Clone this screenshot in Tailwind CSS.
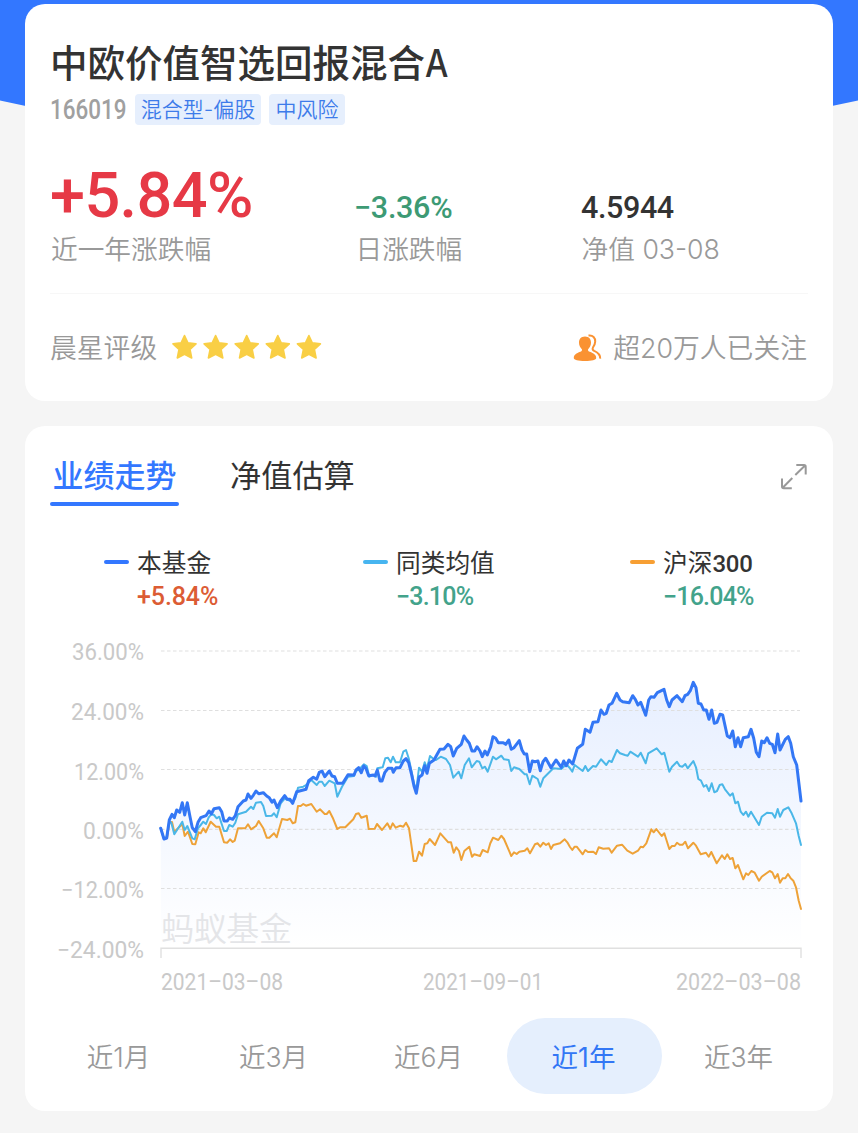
<!DOCTYPE html>
<html lang="zh-CN">
<head>
    <meta charset="UTF-8">
    <meta name="viewport" content="width=device-width, initial-scale=1.0">
    <title>中欧价值智选回报混合A</title>
    <!-- Tailwind CSS for styling -->
    <script src="https://cdn.jsdelivr.net/npm/@tailwindcss/browser@4"></script>
    <style>
        body {
            font-family: 'Inter', 'Noto Sans CJK SC', sans-serif;
        }
        .num {
            font-family: 'Roboto', 'Noto Sans CJK SC', sans-serif;
        }
    </style>
</head>
<body class="relative bg-[#f5f5f5] w-[858px] h-[1133px] overflow-hidden pt-1 px-[25px] whitespace-nowrap">

    <!-- Blue header behind the first card -->
    <svg class="absolute left-0 top-0 -z-10" width="858" height="150" viewBox="0 0 858 150">
        <path d="M0 0H858V100.5Q429 196 0 100.5Z" fill="#3377ff" />
    </svg>

    <!-- Fund summary -->
    <div class="h-[397px] bg-white rounded-[20px] px-[25px] pt-[35px]">
        <h1 class="h-[50px] leading-[50px] text-[37.5px] font-medium text-[#333]">中欧价值智选回报混合<span class="inline-block origin-left scale-x-[0.88]">A</span></h1>
        <div class="mt-[5px] flex h-[31px] items-center text-[21px]">
            <div class="w-[85px] pt-[3px]">
                <span class="num inline-block origin-left scale-x-[0.83] text-[27px] leading-[31px] font-medium text-[#a0a0a0]">166019</span>
            </div>
            <span class="w-[126px] h-[31px] leading-[31px] text-center rounded-[4px] bg-[#e6effd] font-[350] text-[#3d7bea]">混合型-偏股</span>
            <span class="ml-2 w-[76px] h-[31px] leading-[31px] text-center rounded-[4px] bg-[#e6effd] font-[350] text-[#3d7bea]">中风险</span>
        </div>

        <div class="mt-[38px] grid grid-cols-[304px_226px_1fr] items-end">
            <div class="num h-16 leading-[66px] text-[63px] tracking-[-0.6px] font-medium text-[#e63946]">+5.84%</div>
            <div class="num h-10 leading-[42px] text-[30.5px] tracking-[-0.3px] font-medium text-[#3d9a74]">−3.36%</div>
            <div class="num h-10 pl-px leading-[42px] text-[30.5px] tracking-[-0.4px] font-medium text-[#333]">4.5944</div>
        </div>
        <div class="mt-[2px] grid grid-cols-[304.5px_226px_1fr] h-10 pl-px leading-[41px] text-[26.7px] font-[350] text-[#999]">
            <div>近一年涨跌幅</div>
            <div>日涨跌幅</div>
            <div>净值 03-08</div>
        </div>

        <div class="mt-6 border-t border-[#f7f7f7]"></div>

        <div class="mt-[34px] flex h-10 items-center text-[26.8px] font-[350] text-[#999]">
            <span class="leading-[40px]">晨星评级</span>
            <!-- Star rating -->
            <svg class="ml-[15px] mb-[2px]" width="152" height="26" viewBox="0 0 152 26" fill="#f9cf45" stroke="#f9cf45" stroke-width="1.6" stroke-linejoin="round">
                <defs>
                    <path id="star" d="M12.5 1.5L15.9 8.9L24 9.8L18 15.3L19.7 24L12.5 20.2L5.3 24L7 15.3L1 9.8L9.1 8.9Z" />
                </defs>
                <use href="#star" />
                <use href="#star" x="31.1" />
                <use href="#star" x="62.2" />
                <use href="#star" x="93.3" />
                <use href="#star" x="124.4" />
            </svg>
            <svg class="ml-auto mr-[11px]" width="29" height="28" viewBox="0 0 29 28">
                <path d="M12 2.5C7.8 2.5 6 5.4 6 8.6C6 11.4 7.1 13.6 8.9 15.2C9.3 16.6 8.6 17.2 7.2 17.8C3.4 19.4 .8 20.6 .8 24C.8 26 5.2 27 12 27S23.2 26 23.2 24C23.2 20.6 20.6 19.4 16.8 17.8C15.4 17.2 14.7 16.6 15.1 15.2C16.9 13.6 18 11.4 18 8.6C18 5.4 16.2 2.5 12 2.5Z" fill="#fa9232" />
                <path d="M15.5 1.6C20 1 22.4 4 22.2 7.6C22 10.2 21.2 12 20 13.4C19.2 14.8 19.6 16 21.2 16.8C25.4 18.6 27.4 20.4 27.2 24.6" fill="none" stroke="#fa9232" stroke-width="2" />
            </svg>
            <span class="leading-[40px] mr-px">超20万人已关注</span>
        </div>
    </div>

    <!-- Performance -->
    <div class="mt-[25px] h-[685px] bg-white rounded-[20px] pt-[26px]">
        <div class="flex h-[54px] px-[25px]">
            <div class="relative w-[129px] text-center leading-[48px] text-[31px] font-medium text-[#3377ff]">
                业绩走势
                <span class="absolute left-0 bottom-0 w-full h-1 rounded-sm bg-[#3377ff]"></span>
            </div>
            <div class="ml-[51px] leading-[48px] text-[31.2px] text-[#333]">净值估算</div>
            <svg class="ml-auto mt-[11px]" width="28" height="28" viewBox="0 0 28 28" fill="none" stroke="#999" stroke-width="2">
                <path d="M15.3 12L25.3 2.3M16.3 2H24Q25.7 2 25.7 3.7V11.5M12.3 15L2.7 24.7M2 15.5V23.5Q2 25.3 3.8 25.3H11.8" />
            </svg>
        </div>

        <!-- Legend -->
        <div class="mt-[39px] pl-[79px] grid grid-cols-[259px_267px_1fr] text-[24.7px] text-[#333]">
            <div class="grid grid-cols-[33px_1fr] items-center">
                <span class="w-[25px] h-1 rounded-sm bg-[#3377ff]"></span>
                <span class="h-[34px] leading-[36px]">本基金</span>
                <span class="num col-start-2 h-[34px] leading-[36px] text-[25px] tracking-[-0.1px] font-medium text-[#dc5c34]">+5.84%</span>
            </div>
            <div class="grid grid-cols-[33px_1fr] items-center">
                <span class="w-[25px] h-1 rounded-sm bg-[#47b5f0]"></span>
                <span class="h-[34px] leading-[36px]">同类均值</span>
                <span class="num col-start-2 h-[34px] leading-[36px] text-[25px] tracking-[-0.8px] font-medium text-[#43a38b]">−3.10%</span>
            </div>
            <div class="grid grid-cols-[33px_1fr] items-center">
                <span class="w-[25px] h-1 rounded-sm bg-[#f79f33]"></span>
                <span class="h-[34px] leading-[36px]">沪深<span class="num text-[24px] tracking-[-0.2px] font-medium">300</span></span>
                <span class="num col-start-2 h-[34px] leading-[36px] text-[25px] tracking-[-0.8px] font-medium text-[#43a38b]">−16.04%</span>
            </div>
        </div>

        <!-- Chart -->
        <svg class="num mt-[17px]" width="808" height="370" viewBox="25 630 808 370">
            <defs>
                <linearGradient id="area" x1="0" y1="682" x2="0" y2="948" gradientUnits="userSpaceOnUse">
                    <stop offset="0" stop-color="#3377ff" stop-opacity="0.12" />
                    <stop offset="0.5" stop-color="#3377ff" stop-opacity="0.06" />
                    <stop offset="1" stop-color="#3377ff" stop-opacity="0" />
                </linearGradient>
            </defs>

            <path id="fund-area" fill="url(#area)" />
            <path d="M161 651H800M161 710.5H800M161 769.5H800M161 829.3H800M161 888.5H800" stroke="#dfdfdf" stroke-width="1.2" stroke-dasharray="3.5 2.5" />
            <text x="161" y="941" font-size="33" font-weight="350" fill="#e4e5e8" textLength="131">蚂蚁基金</text>
            <path d="M161 958V948.3H801V958" fill="none" stroke="#e0e0e0" stroke-width="1.4" />

            <g font-size="23" fill="#c9c9c9">
                <text x="72" y="660" textLength="72" lengthAdjust="spacingAndGlyphs">36.00%</text>
                <text x="71" y="720" textLength="73" lengthAdjust="spacingAndGlyphs">24.00%</text>
                <text x="74" y="779.5" textLength="70" lengthAdjust="spacingAndGlyphs">12.00%</text>
                <text x="83" y="839" textLength="61" lengthAdjust="spacingAndGlyphs">0.00%</text>
                <text x="61" y="898" textLength="83" lengthAdjust="spacingAndGlyphs">−12.00%</text>
                <text x="57" y="958" textLength="87" lengthAdjust="spacingAndGlyphs">−24.00%</text>
                <text x="161" y="989.5" textLength="122" lengthAdjust="spacingAndGlyphs">2021–03–08</text>
                <text x="423" y="989.5" textLength="120" lengthAdjust="spacingAndGlyphs">2021–09–01</text>
                <text x="676" y="989.5" textLength="125" lengthAdjust="spacingAndGlyphs">2022–03–08</text>
            </g>

            <g fill="none" stroke-linejoin="round" stroke-linecap="round">
                <polyline stroke="#eea238" stroke-width="2" points="160.7,828.3 164,839 167,838 169.3,823 172,822 174.3,832 182.3,824 184.7,836 188,831.7 192.3,844 195.3,844.3 198.7,832.3 200.7,833.3 203.3,828.3 205.7,832.3 210.7,821.7 216,826.7 219.3,826.7 224,842.3 227.3,842.7 230,839.3 232.7,842 234.7,840.7 238,828.3 245.3,828.3 248,824.3 251,829.3 256,826 258.7,821 263.3,828.3 266.7,837.7 269.3,837.7 274,833.3 276.7,837.3 282,819 287.3,820 290,818.7 292.7,823.3 295.3,822.3 298,806 300.7,806 303.3,804 306,805.7 311.3,804 316.7,811.7 320,809.3 324.7,814 326.7,814 329.3,811 332.7,817.7 337.3,829 340,827.3 345.3,827.3 353.3,819.3 356,814 358.7,813.3 361.3,817.7 366.7,815.7 368.7,829 374.7,828.7 377,824 382,830 387.3,823.3 390.3,828.7 392.7,823.3 395.7,827.7 400.3,825.7 403.3,826.7 406,822.7 409,828.3 411.3,844.3 413.7,861 416.3,861 419,851.7 422,855.7 424.7,844 427.3,843.3 429.7,839 435,845 440.3,833.3 448.3,842.3 451,842.3 453.7,852.7 456.3,847.3 459,851 461.3,860 464.3,851 469.3,846.7 472,856.7 474.3,854.3 480,856 482.7,850 487.7,852.3 490.3,843.3 493,837.7 498.3,840 501.3,835.7 504,839 509,850.7 511.3,856 514,852.3 516.7,854 519.3,851.7 524.7,850.7 527.3,848.3 530,853.3 535,844.3 537.7,843.3 540.3,846.7 543.3,842.7 546,845 548.7,843.3 551,849 553.3,845 560,843.3 564.7,839.3 567.3,842.3 570,847 572.3,850 574.7,846.7 576.7,846.7 582.7,854.3 585.3,850 588,852 593.3,851.7 596,854 598.7,847.3 603.3,848.7 609,848.3 611.7,852.7 617,845.7 622,844.7 627.3,850.7 632.7,853.7 638,850.7 640.7,846.7 643,847.3 646.3,843.3 651.3,829.3 653.7,832.3 656.3,829 661.7,836 664.3,833.3 669.3,849 672,846 674.7,846 677,842.7 679.7,844.7 682.7,844.7 685.3,841.7 688,848.3 693.3,842.7 696,845.7 700.7,854.3 706,852.7 708.7,856.7 711.3,852 716.7,863.3 722,855.3 724.7,859 727.3,854.3 730,859 732.7,858 735.3,868.3 738,865 743.3,879.3 746,873.3 748.3,875 751.3,871 754.7,872.7 759,880.7 761.7,876.7 769.7,871 772.3,872.3 775,878.3 777.7,874 780,882.7 782.7,878.3 785.3,878.3 788,874 790.7,878.3 793.3,880.7 796,887.3 798.7,900.7 801,909" />
                <polyline stroke="#4ab7e8" stroke-width="2" points="160.7,828.3 164,839 166.7,836.7 169.3,821.7 171.3,822.7 174.3,834.3 182.3,821.7 184.7,830 187.3,826 192.3,838.3 194.7,839.3 198,828.3 200.7,825 203.3,821.7 206,824 208.7,817.3 211.3,814.3 214,815 216.7,818.3 219.3,816.7 224,831 226.7,831 229.3,825 232.7,826.7 235.3,822.7 238,814.3 246,811.7 251,806.7 253.3,809 256,802.7 261,802 263.3,806 266,816 271.7,815.7 274,813.3 276.7,817.3 280.7,803.3 284.7,798.7 292.7,801.7 295.3,798.3 298,787.7 303.3,786.7 306,785 311.3,780 316.7,785 319.3,781.7 322,781.7 324.7,786 329.3,780.7 334.7,783.3 337.3,796.7 342,786.7 348,776.7 354,776 356,770.7 358.7,770 364,764.3 366.7,766 369.3,776.7 373.3,775 376,776.7 377.3,768.3 382.7,767.3 385.3,758.3 388,757.7 390.7,762.3 393,756.7 395.7,762.3 400,762.3 403.3,751.7 406,750 408.7,758.3 411.3,770 414,783.3 416.3,790 419,767.7 422,771.7 424.7,762.3 427,768.3 430,756 432.7,758.3 436,760 440.7,756.7 446,759 450,765 453.3,777.7 458.7,771.7 461.3,778.3 464.7,765 469,758.3 471.7,767.3 476.7,761 479.3,761.7 482.3,768.3 485,766.7 487.7,771.7 493,756.7 496,759.3 501.3,755.7 504,759.3 508.7,760 511.3,771 514,767.3 519.3,769 524.7,774.3 526.7,774.3 529.7,784.3 532.3,775.7 537.7,779 540.3,786.7 543.3,778.3 548.3,773.3 553.3,768.3 561.3,769 566.3,764.3 570,768.3 572.3,771.7 574.7,765 582.7,771 585.3,766 588,771 593,766 596,766.7 601,759.3 606.3,765 609,760.7 611.7,762 617,750 620,753.3 625,755 627.7,755.7 630.3,751.7 638,756.7 640.7,752.7 645.7,763.3 648.3,753.3 656.7,748.3 661.7,754.3 664.3,752.7 669.3,771.7 672,766.7 677,761.7 679.7,766 682.3,766.7 685.3,764 687.7,768.3 693.3,761 696,767.3 698.3,779 701,780.7 703.7,786.7 706.3,785 709,791 711.7,783.3 714.3,792.3 717,791 719.7,785 722.3,784.3 725,789.3 730,795.7 732.7,793.3 735.3,803.3 738,801.7 740.7,811.7 743.3,815 746,811.7 748.3,816.7 751,811.7 759,825 761.7,816.7 767,812.7 772.3,813.3 775,817.7 777.7,809 780,816.7 783.3,810 788.3,807.3 791.7,813.3 796,823.3 798.7,836 801,845" />
                <polyline id="fund-line" stroke="#3377f5" stroke-width="3" points="160.7,828.3 164,839 166.7,838 169.3,820 172,814.3 174.3,817.7 176.7,810 179.7,812.3 182.3,802.7 184.7,815 187.3,802.7 190,816.7 192.3,827.7 195.3,831.7 198,822.3 200.7,817.7 206,815.7 209,811 211.3,814 214,808.7 219.3,807.7 221.7,811.7 224,821 227.3,821 229.3,818 232.7,819.3 235.3,815.7 238,806.7 243.3,801 246,800 248,794 251,798.3 253.3,795.3 256,791 258.7,793.7 263.3,792.7 266.7,796 269.3,797.7 272,802.3 274,800 277.3,807.7 280.7,801 284.7,795.7 287.3,799.3 290,799.3 292.7,803.3 296.7,791.7 303.3,790 306,789.3 308.7,780.7 313.3,777.3 316.7,779.3 319.3,772.3 322,771 324.7,776.7 329.3,771 332,776 334.7,776.7 337.3,783.3 342.7,783.3 348,774.7 354,775 356,770 358.7,767.7 361.3,772.7 363.7,766 366,768.5 368.7,775.7 373.3,775 375,776 377.3,770 380,781 382,781 384.7,772.7 388,768.3 392,768.3 393.3,772.3 396,767.7 400,767.7 403.3,761 406,758.7 408.7,762.7 411.3,773.3 414,786 416.3,793.3 419,777.3 422,775 424.7,765.7 427,773.3 429.3,763.3 434,760 437.3,754 440,749.3 444,749 448,744.3 450.7,746.7 453.3,756 456.7,748.3 461.3,744.3 464,736 466.7,740 469.3,743.3 472,751 474.7,751 477,746.7 480,751 482.3,756.7 485,751 487.3,755 490.7,746.7 493,736.7 495.7,738.3 498.3,742.7 503.3,742.7 505.7,744.3 508.7,740 511.3,749.3 514,747.7 519.3,740.7 522,750 524.3,754 526.7,754 529.7,771.7 532.3,761 535,761.7 538,761 540.3,770.7 543,761.7 545.7,758.3 551,767.7 556,760 561.3,767.3 563.7,761 566.3,765.7 569,760 572.7,764 577.3,748.3 582.7,744.3 585.3,729.3 590,732.3 593,722.3 598,721.7 601,710 604,714.3 606.3,713.3 609,705 612,703.3 616.7,693.3 620,700 622.7,701.7 629.3,702.7 632.7,695.7 635.3,699.3 638,705 640.7,702.3 645.7,715.3 648.7,700 651,696.7 654,697.3 657.3,692.7 664,689.3 666.7,700 669.3,706.7 672,700 677,695.7 682.3,701.7 685,695.7 687.7,694.3 690.3,690.7 693.3,682.3 696,687.7 698.3,703.3 701,704 703.7,710 706.3,710 709,719.3 711.7,710 714.3,723.3 717,722.3 720,714.3 722.7,715 727.3,736 730,737.7 732.7,731 735.3,746.7 738,737.7 740.7,746.7 743.3,737.7 748.3,736.7 751,729.3 753.7,738.3 756.3,752.3 759,756.7 761.7,741 764.3,742.7 767,737.7 769.7,743.3 772.3,744.3 775,752.7 777.7,734 780,750 785.3,739.3 788.3,736.7 790.7,743.3 793.3,756.7 796.7,765 801,801" />
            </g>
        </svg>

        <!-- Period selector -->
        <div class="mt-[18px] ml-[17px] grid grid-cols-[repeat(5,155px)] grid-rows-[76px] text-center leading-[78px] text-[26.5px] font-[350] text-[#999]">
            <div class="pr-[2px]">近1月</div>
            <div class="pr-[2px]">近3月</div>
            <div class="pr-[2px]">近6月</div>
            <div class="h-[76px] pr-[2px] rounded-full bg-[#e5effd] font-normal text-[#3377f5]">近1年</div>
            <div class="pr-[2px]">近3年</div>
        </div>
    </div>

    <script>
        // Close the fund line down to the axis to get the shaded area
        const line = document.getElementById('fund-line');
        document.getElementById('fund-area').setAttribute('d', `M161 948L${line.getAttribute('points')}L801 948Z`);
    </script>
</body>
</html>
